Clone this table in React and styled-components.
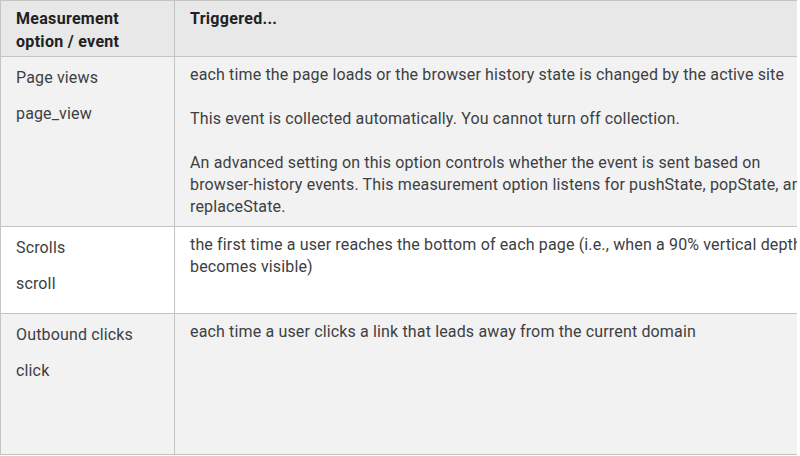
import React from 'react'
import styled, { createGlobalStyle } from 'styled-components'

const GlobalStyle = createGlobalStyle`
    html, body {
        margin: 0;
        padding: 0;
        background: #ffffff;
    }
    body {
        font-family: Roboto, "Noto Sans", "Liberation Sans", sans-serif;
        color: #3c4043;
    }
`;

const Viewport = styled.div`
    width: 797px;
    height: 456px;
    overflow: hidden;
`;

const Table = styled.table`
    width: 828px;
    border-collapse: collapse;
    table-layout: fixed;
    font-size: 16px;
    letter-spacing: 0.15px;
`;

const HeadCell = styled.th`
    height: 56px;
    box-sizing: border-box;
    padding: 6px 15px 3px;
    background: #e8e8e8;
    border: 1px solid #c4c4c4;
    color: #202124;
    font-weight: 700;
    letter-spacing: 0.3px;
    line-height: 23px;
    text-align: left;
    vertical-align: top;
`;

const Row = styled.tr`
    height: ${ p => p.$height }px;
    background: ${ p => p.$shaded ? '#f2f2f2' : '#ffffff' };
`;

const Cell = styled.td`
    box-sizing: border-box;
    padding: ${ p => p.$name ? '10px' : '7px' } 15px 8px;
    border: 1px solid #c4c4c4;
    vertical-align: top;
    line-height: 22px;
`;

const Para = styled.p`
    margin: 0 0 ${ p => p.$gap }px;

    &:last-child {
        margin-bottom: 0;
    }
`;

const rows = [
    {
        name: 'Page views',
        event: 'page_view',
        height: 169,
        shaded: true,
        text: [
            'each time the page loads or the browser history state is changed by the active site',
            'This event is collected automatically. You cannot turn off collection.',
            'An advanced setting on this option controls whether the event is sent based on browser-history events. This measurement option listens for pushState, popState, and replaceState.',
        ],
    },
    {
        name: 'Scrolls',
        event: 'scroll',
        height: 87,
        shaded: false,
        text: [
            'the first time a user reaches the bottom of each page (i.e., when a 90% vertical depth becomes visible)',
        ],
    },
    {
        name: 'Outbound clicks',
        event: 'click',
        height: 141,
        shaded: true,
        text: [
            'each time a user clicks a link that leads away from the current domain',
        ],
    },
];

const App = () => (
    <>
        <GlobalStyle/>
        <Viewport>
            <Table>
                <colgroup>
                    <col style={ { width: 174 } }/>
                    <col/>
                </colgroup>
                <thead>
                    <tr>
                        <HeadCell>Measurement option / event</HeadCell>
                        <HeadCell>Triggered...</HeadCell>
                    </tr>
                </thead>
                <tbody>
                    { rows.map(row => (
                        <Row key={ row.event } $height={ row.height } $shaded={ row.shaded }>
                            <Cell $name>
                                <Para $gap={ 14 }>{ row.name }</Para>
                                <Para $gap={ 14 }>{ row.event }</Para>
                            </Cell>
                            <Cell>
                                { row.text.map(t => <Para key={ t } $gap={ 22 }>{ t }</Para>) }
                            </Cell>
                        </Row>
                    )) }
                </tbody>
            </Table>
        </Viewport>
    </>
);

export default App;
